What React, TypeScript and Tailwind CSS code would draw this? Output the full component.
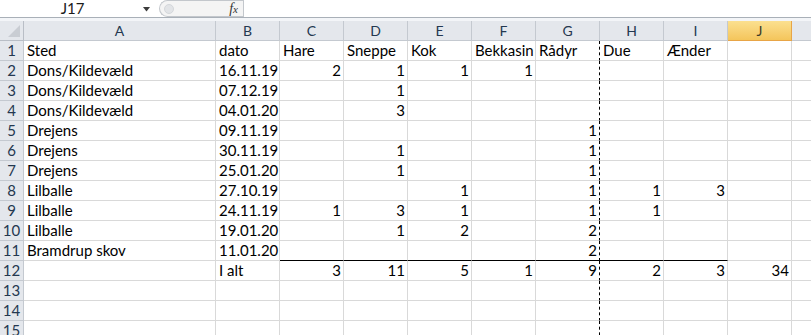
const cols = ["A", "B", "C", "D", "E", "F", "G", "H", "I", "J", "K"];

type Row = (string | number | null)[];

// A..K per row
const rows: Row[] = [
  ["Sted", "dato", "Hare", "Sneppe", "Kok", "Bekkasin", "Rådyr", "Due", "Ænder", null, null],
  ["Dons/Kildevæld", "16.11.19", 2, 1, 1, 1, null, null, null, null, null],
  ["Dons/Kildevæld", "07.12.19", null, 1, null, null, null, null, null, null, null],
  ["Dons/Kildevæld", "04.01.20", null, 3, null, null, null, null, null, null, null],
  ["Drejens", "09.11.19", null, null, null, null, 1, null, null, null, null],
  ["Drejens", "30.11.19", null, 1, null, null, 1, null, null, null, null],
  ["Drejens", "25.01.20", null, 1, null, null, 1, null, null, null, null],
  ["Lilballe", "27.10.19", null, null, 1, null, 1, 1, 3, null, null],
  ["Lilballe", "24.11.19", 1, 3, 1, null, 1, 1, null, null, null],
  ["Lilballe", "19.01.20", null, 1, 2, null, 2, null, null, null, null],
  ["Bramdrup skov", "11.01.20", null, null, null, null, 2, null, null, null, null],
  [null, "I alt", 3, 11, 5, 1, 9, 2, 3, 34, null],
  [null, null, null, null, null, null, null, null, null, null, null],
  [null, null, null, null, null, null, null, null, null, null, null],
  [null, null, null, null, null, null, null, null, null, null, null],
];

const FormulaBar = () => (
  <div className="flex h-[18px] border-b border-[#a9b0b8] bg-white">
    <div className="flex w-[159px] items-center">
      <span className="flex-1 pl-[2px] text-center text-[15px] leading-none text-[#1b1b1b]">J17</span>
      <svg width="8" height="5" viewBox="0 0 8 5" className="mr-[8px] mt-[2px]">
        <path d="M0 0h7L3.5 4.5z" fill="#3c3c3c" />
      </svg>
    </div>
    <div className="relative flex w-[84px] items-center justify-end rounded-l-full border-y border-l border-[#c3c7cc] bg-[#f4f4f4] pr-[5px]">
      <div className="absolute left-[4px] top-[3px] h-[10px] w-[10px] rounded-full bg-[#e2e4e7] border border-[#d4d7db]" />
      <span className="font-['Liberation_Serif'] text-[14px] italic leading-none text-[#333]">
        f<span className="text-[11px]">x</span>
      </span>
    </div>
    <div className="flex-1 border-l border-[#c3c7cc]" />
  </div>
);

const App = () => {
  return (
    <div className="h-[335px] w-[811px] overflow-hidden bg-white font-['Lato'] text-black">
      <FormulaBar />
      <div className="h-[3px] bg-[#f3f5f8]" />
      <div className="grid grid-cols-[24px_192px_repeat(10,64px)] auto-rows-[20px]">
        {/* header row */}
        <div className="relative border-r border-b border-[#b9bec6] bg-[#e4e7ec]">
          <svg width="12" height="12" viewBox="0 0 12 12" className="absolute bottom-[3px] right-[3px]">
            <path d="M12 0V12H0z" fill="#c9cdd3" />
          </svg>
        </div>
        {cols.map((c) =>
          c === "J" ? (
            <div
              key={c}
              className="flex items-center justify-center border-r border-b border-[#e8a546] bg-gradient-to-b from-[#fbe08f] to-[#f4c55b] text-[14px] text-[#3a3a2a]"
            >
              {c}
            </div>
          ) : (
            <div
              key={c}
              className="flex items-center justify-center border-r border-b border-[#c4c9d0] bg-[#e4e7ec] text-[14px] text-[#243850]"
            >
              {c}
            </div>
          )
        )}
        {rows.map((r, ri) => (
          <RowCells key={ri} n={ri + 1} cells={r} />
        ))}
      </div>
    </div>
  );
};

const RowCells = ({ n, cells }: { n: number; cells: Row }) => (
  <>
    <div className="flex items-center justify-center border-r border-b border-[#c4c9d0] bg-[#e4e7ec] text-[15px] text-[#243850]">
      {n}
    </div>
    {cells.map((v, ci) => {
      const totalTop = n === 11 && ci >= 2 && ci <= 8;
      const pageBreak = ci === 6;
      const num = typeof v === "number";
      return (
        <div
          key={ci}
          className={
            "flex items-center overflow-visible whitespace-nowrap text-[15px] leading-none " +
            (num ? "justify-end pr-[2px] " : "justify-start pl-[3px] ") +
            (totalTop ? "border-b border-b-black " : "border-b border-b-[#d9d9d9] ") +
            (pageBreak
              ? "border-r border-r-black [border-right-style:dashed] "
              : "border-r border-r-[#d9d9d9] ")
          }
        >
          {v}
        </div>
      );
    })}
  </>
);

export default App;
